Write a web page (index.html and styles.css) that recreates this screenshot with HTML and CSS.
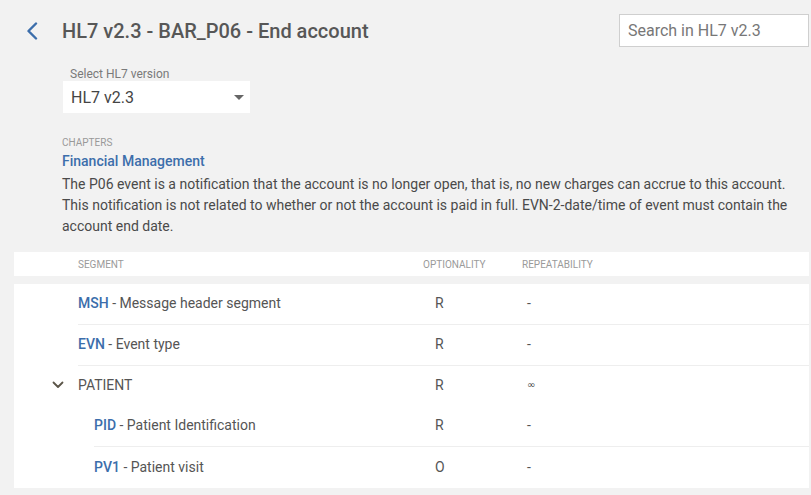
FILE: index.html
```html
<!DOCTYPE html>
<html lang="en">
<head>
<meta charset="utf-8">
<title>HL7 v2.3 - BAR_P06 - End account</title>
<link rel="stylesheet" href="styles.css">
</head>
<body>
<div class="page">
  <header class="topbar">
    <a class="back" href="#" aria-label="Back">
      <svg width="12" height="18" viewBox="0 0 12 18"><path d="M10 1.5 L2.5 9 L10 16.5" fill="none" stroke="#3c6eab" stroke-width="2.4" stroke-linecap="round" stroke-linejoin="round"/></svg>
    </a>
    <h1 class="title">HL7 v2.3 - BAR_P06 - End account</h1>
    <div class="search">Search in HL7 v2.3</div>
  </header>

  <section class="intro">
    <div class="field">
      <div class="field-label">Select HL7 version</div>
      <div class="select">
        <span>HL7 v2.3</span>
        <svg width="10" height="5" viewBox="0 0 10 5"><path d="M0 0 H10 L5 5 Z" fill="#666"/></svg>
      </div>
    </div>

    <div class="chapters">
      <div class="chapters-label">CHAPTERS</div>
      <a class="chapter-link" href="#">Financial Management</a>
      <p class="desc">The P06 event is a notification that the account is no longer open, that is, no new charges can accrue to this account. This notification is not related to whether or not the account is paid in full. EVN-2-date/time of event must contain the account end date.</p>
    </div>
  </section>

  <div class="table-head">
    <div class="th seg">SEGMENT</div>
    <div class="th opt">OPTIONALITY</div>
    <div class="th rep">REPEATABILITY</div>
  </div>

  <div class="table-body">
    <div class="row">
      <div class="cell seg"><span class="code">MSH</span> - Message header segment</div>
      <div class="cell opt">R</div>
      <div class="cell rep">-</div>
    </div>
    <div class="row">
      <div class="cell seg"><span class="code">EVN</span> - Event type</div>
      <div class="cell opt">R</div>
      <div class="cell rep">-</div>
    </div>
    <div class="row group">
      <div class="cell seg">
        <svg class="chev" width="12" height="8" viewBox="0 0 12 8"><path d="M1.5 1.5 L6 6 L10.5 1.5" fill="none" stroke="#5b5548" stroke-width="1.8" stroke-linecap="round" stroke-linejoin="round"/></svg>
        <span>PATIENT</span>
      </div>
      <div class="cell opt">R</div>
      <div class="cell rep inf">∞</div>
    </div>
    <div class="row nested">
      <div class="cell seg"><span class="code">PID</span> - Patient Identification</div>
      <div class="cell opt">R</div>
      <div class="cell rep">-</div>
    </div>
    <div class="row nested last">
      <div class="cell seg"><span class="code">PV1</span> - Patient visit</div>
      <div class="cell opt">O</div>
      <div class="cell rep">-</div>
    </div>
  </div>
</div>
</body>
</html>
```

FILE: styles.css
```css
* { box-sizing: border-box; }

html, body {
  margin: 0;
  padding: 0;
  background: #f2f2f2;
  font-family: Roboto, "Liberation Sans", Arial, sans-serif;
  color: #555;
}

.page {
  width: 811px;
  height: 495px;
  padding: 14px 2px 0 14px;
  overflow: hidden;
}

.topbar {
  display: flex;
  align-items: center;
  height: 33px;
}

.back {
  display: flex;
  align-items: center;
  margin-left: 12px;
  width: 36px;
  height: 33px;
}

.title {
  margin: 0;
  font-size: 20px;
  font-weight: 500;
  color: #575757;
  flex: 1;
  line-height: 24px;
}

.search {
  width: 190px;
  height: 33px;
  border: 1px solid #cfcfcf;
  background: #fff;
  font-size: 16px;
  color: #777;
  padding-left: 8px;
  display: flex;
  align-items: center;
}

.intro {
  padding-left: 48px;
}

.field {
  margin-top: 21px;
  width: 188px;
}

.field-label {
  font-size: 12px;
  line-height: 13px;
  color: #7a7a7a;
  padding-left: 8px;
}

.select {
  margin-left: 1px;
  height: 32px;
  background: #fff;
  display: flex;
  align-items: center;
  justify-content: space-between;
  padding: 0 6px 0 8px;
  font-size: 16px;
  color: #444;
}

.chapters {
  margin-top: 24px;
}

.chapters-label {
  font-size: 10px;
  line-height: 12px;
  color: #999;
}

.chapter-link {
  display: block;
  margin-top: 2px;
  font-size: 14px;
  line-height: 20px;
  color: #3c6eab;
  font-weight: 500;
  text-decoration: none;
}

.desc {
  margin: 3px 0 0;
  font-size: 14px;
  line-height: 21px;
  color: #4a4a4a;
  padding-right: 10px;
}

.table-head {
  margin-top: 15px;
  background: #fff;
  height: 24px;
  display: grid;
  grid-template-columns: 409px 99px 1fr;
  align-items: center;
}

.th {
  font-size: 10px;
  color: #9a9a9a;
}

.table-head .seg { padding-left: 64px; }

.table-body {
  margin-top: 8px;
  background: #fff;
}

.row {
  margin-left: 64px;
  height: 41px;
  padding-bottom: 2px;
  border-bottom: 1px solid #eeeeee;
  display: grid;
  grid-template-columns: 345px 99px 1fr;
  align-items: center;
  font-size: 14px;
  color: #555;
}

.row.group {
  margin-left: 38px;
  grid-template-columns: 371px 99px 1fr;
  border-bottom: none;
  height: 40px;
}

.row.nested {
  margin-left: 80px;
  grid-template-columns: 329px 99px 1fr;
}

.row.last {
  border-bottom: none;
}

.cell.seg {
  display: flex;
  align-items: center;
  white-space: pre;
}

.chev {
  margin-right: 14px;
}

.code {
  color: #3c6eab;
  font-weight: 500;
}

.cell.opt { padding-left: 12px; }
.cell.rep { padding-left: 5px; }
.cell.inf {
  font-family: "DejaVu Sans", sans-serif;
  font-size: 10px;
  color: #444;
  padding-bottom: 2px;
}
```
